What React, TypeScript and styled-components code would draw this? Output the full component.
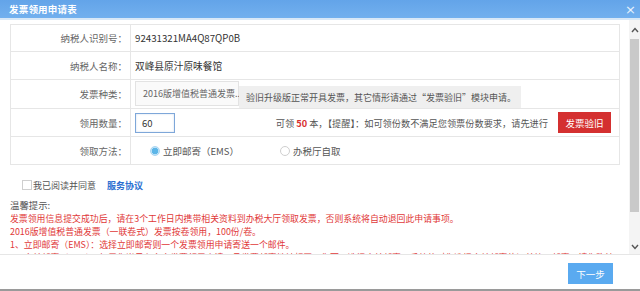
import * as React from 'react';
import styled, { createGlobalStyle } from 'styled-components';

const GlobalStyle = createGlobalStyle`
  html, body {
    margin: 0;
    padding: 0;
    background: #fff;
  }
  body {
    font-family: 'Noto Sans CJK SC', 'Noto Sans', sans-serif;
    font-size: 9.5px;
    color: #555;
  }
  * {
    box-sizing: border-box;
  }
`;

const Dialog = styled.div`
  width: 640px;
  height: 291px;
  display: flex;
  flex-direction: column;
  background: #fff;
  border-bottom: 2px solid #9a9a9a;
  overflow: hidden;
`;

const Header = styled.div`
  height: 20px;
  flex: none;
  display: flex;
  align-items: center;
  justify-content: space-between;
  padding: 0 4px 0 9px;
  background: linear-gradient(#63a4e9, #72b0ee);
  border-bottom: 2px solid #d8e8f7;
`;

const Title = styled.span`
  color: #fff;
  font-weight: bold;
  font-size: 9.5px;
  letter-spacing: 0.2px;
`;

const Close = styled.span`
  color: #e8f3fd;
  font-size: 13px;
  line-height: 1;
  font-family: 'DejaVu Sans', sans-serif;
`;

const Body = styled.div`
  flex: 1;
  display: flex;
  min-height: 0;
  border-bottom: 1px solid #e6e6e6;
`;

const Content = styled.div`
  flex: 1;
  overflow: hidden;
  padding: 4px 9px 0 10px;
`;

const Scrollbar = styled.div`
  width: 11px;
  flex: none;
  display: flex;
  flex-direction: column;
  align-items: center;
  background: #f4f4f4;
  padding: 7px 0 4px;
`;

const Arrow = styled.svg`
  flex: none;
  width: 8px;
  height: 6px;
`;

const Thumb = styled.div`
  width: 9px;
  height: 173px;
  margin: 6px 0 auto;
  background: #c9c9c9;
`;

const Table = styled.div`
  border: 1px solid #e6e6e6;
  border-bottom: none;
`;

const Row = styled.div<{ $h?: number }>`
  display: flex;
  height: ${(p) => p.$h ?? 28}px;
  border-bottom: 1px solid #e6e6e6;
`;

const Label = styled.div`
  width: 120px;
  flex: none;
  display: flex;
  align-items: center;
  justify-content: flex-end;
  padding-right: 3px;
  border-right: 1px solid #e6e6e6;
  color: #666;
`;

const Value = styled.div`
  flex: 1;
  display: flex;
  align-items: center;
  padding: 0 8px 0 4px;
  color: #333;
  font-size: 9.7px;
  min-width: 0;
`;

const SelectBox = styled.div`
  width: 104px;
  height: 25px;
  margin-top: -2px;
  display: flex;
  align-items: center;
  padding-left: 7px;
  border: 1px solid #e3e3e3;
  background: #fafafa;
  color: #666;
  font-size: 9px;
  white-space: nowrap;
`;

const Hint = styled.div`
  align-self: flex-end;
  height: 22px;
  width: 282px;
  display: flex;
  align-items: center;
  padding-left: 7px;
  background: #efefef;
  color: #555;
  font-size: 9px;
  white-space: nowrap;
`;

const QtyInput = styled.div`
  width: 40px;
  height: 20px;
  display: flex;
  align-items: center;
  padding-left: 6px;
  border: 1px solid #7ea7d9;
  box-shadow: inset 0 0 2px rgba(80, 130, 200, 0.3);
  color: #333;
  font-size: 9.5px;
`;

const Notice = styled.span`
  margin-left: auto;
  color: #555;
  font-size: 9.2px;
  white-space: nowrap;
`;

const Num = styled.b`
  color: #d83030;
  font-weight: bold;
`;

const Button = styled.div<{ $bg: string }>`
  display: flex;
  align-items: center;
  justify-content: center;
  height: 21px;
  padding: 0 6px;
  background: ${(p) => p.$bg};
  color: #fff;
  font-size: 9.5px;
  white-space: nowrap;
`;

const RedButton = styled(Button)`
  margin-left: 10px;
  width: 53px;
`;

const RadioGroup = styled.div`
  display: flex;
  align-items: center;
  padding-left: 15px;
  gap: 41px;
`;

const RadioItem = styled.label`
  display: flex;
  align-items: center;
  gap: 3px;
  color: #555;
  font-size: 9.5px;
`;

const RadioDot = styled.span<{ $on?: boolean }>`
  width: 10px;
  height: 10px;
  border-radius: 50%;
  border: 1px solid ${(p) => (p.$on ? '#a9d6f2' : '#cfcfcf')};
  background: ${(p) => (p.$on ? 'radial-gradient(circle, #5db6e8 0 3px, #bfe2f7 3.5px)' : '#fff')};
`;

const AgreeRow = styled.div`
  display: flex;
  align-items: center;
  margin-top: 13px;
  padding-left: 12px;
  height: 14px;
  font-size: 9px;
`;

const CheckBox = styled.span`
  width: 10px;
  height: 10px;
  border: 1px solid #cfcfcf;
  background: #fff;
  margin-right: 1px;
`;

const AgreeText = styled.span`
  color: #555;
`;

const Link = styled.span`
  margin-left: 11px;
  color: #2d6fd1;
  font-weight: bold;
`;

const Tips = styled.div`
  margin-top: 7px;
  line-height: 13px;
  font-size: 8.9px;
  white-space: nowrap;
`;

const TipsTitle = styled.div`
  color: #555;
  font-size: 9.4px;
`;

const TipLine = styled.div`
  color: #df3838;
`;

const Footer = styled.div`
  height: 34px;
  flex: none;
  display: flex;
  align-items: center;
  justify-content: flex-end;
  padding: 0 27px 0 0;
`;

const NextButton = styled(Button)`
  width: 45px;
  margin-top: 3px;
`;

const tips = [
  '发票领用信息提交成功后，请在3个工作日内携带相关资料到办税大厅领取发票，否则系统将自动退回此申请事项。',
  '2016版增值税普通发票（一联卷式）发票按卷领用，100份/卷。',
  '1、立即邮寄（EMS）：选择立即邮寄则一个发票领用申请寄送一个邮件。',
  '2、合并邮寄（EMS）：如用您当日有多个发票领用申请，且发票邮寄地址相同，您可以选择合并邮寄，系统将对您选择合并邮寄的订单统一邮寄，请您确认。',
];

export default function App() {
  return (
    <>
      <GlobalStyle />
      <Dialog>
        <Header>
          <Title>发票领用申请表</Title>
          <Close>×</Close>
        </Header>
        <Body>
          <Content>
            <Table>
              <Row $h={27}>
                <Label>纳税人识别号：</Label>
                <Value>92431321MA4Q87QP0B</Value>
              </Row>
              <Row>
                <Label>纳税人名称：</Label>
                <Value>双峰县原汁原味餐馆</Value>
              </Row>
              <Row $h={29}>
                <Label>发票种类：</Label>
                <Value>
                  <SelectBox>2016版增值税普通发票...</SelectBox>
                  <Hint>验旧升级版正常开具发票，其它情形请通过“发票验旧”模块申请。</Hint>
                </Value>
              </Row>
              <Row>
                <Label>领用数量：</Label>
                <Value>
                  <QtyInput>60</QtyInput>
                  <Notice>
                    可领 <Num>50</Num> 本，【提醒】：如可领份数不满足您领票份数要求，请先进行
                  </Notice>
                  <RedButton $bg="#d43030">发票验旧</RedButton>
                </Value>
              </Row>
              <Row>
                <Label>领取方法：</Label>
                <Value>
                  <RadioGroup>
                    <RadioItem>
                      <RadioDot $on />
                      立即邮寄（EMS）
                    </RadioItem>
                    <RadioItem>
                      <RadioDot />
                      办税厅自取
                    </RadioItem>
                  </RadioGroup>
                </Value>
              </Row>
            </Table>
            <AgreeRow>
              <CheckBox />
              <AgreeText>我已阅读并同意</AgreeText>
              <Link>服务协议</Link>
            </AgreeRow>
            <Tips>
              <TipsTitle>温馨提示:</TipsTitle>
              {tips.map((t) => (
                <TipLine key={t}>{t}</TipLine>
              ))}
            </Tips>
          </Content>
          <Scrollbar>
            <Arrow viewBox="0 0 8 6">
              <path d="M1 5 L4 1.5 L7 5" fill="none" stroke="#555" strokeWidth="1.4" />
            </Arrow>
            <Thumb />
            <Arrow viewBox="0 0 8 6">
              <path d="M1 1 L4 4.5 L7 1" fill="none" stroke="#555" strokeWidth="1.4" />
            </Arrow>
          </Scrollbar>
        </Body>
        <Footer>
          <NextButton $bg="#5aaaf0">下一步</NextButton>
        </Footer>
      </Dialog>
    </>
  );
}
